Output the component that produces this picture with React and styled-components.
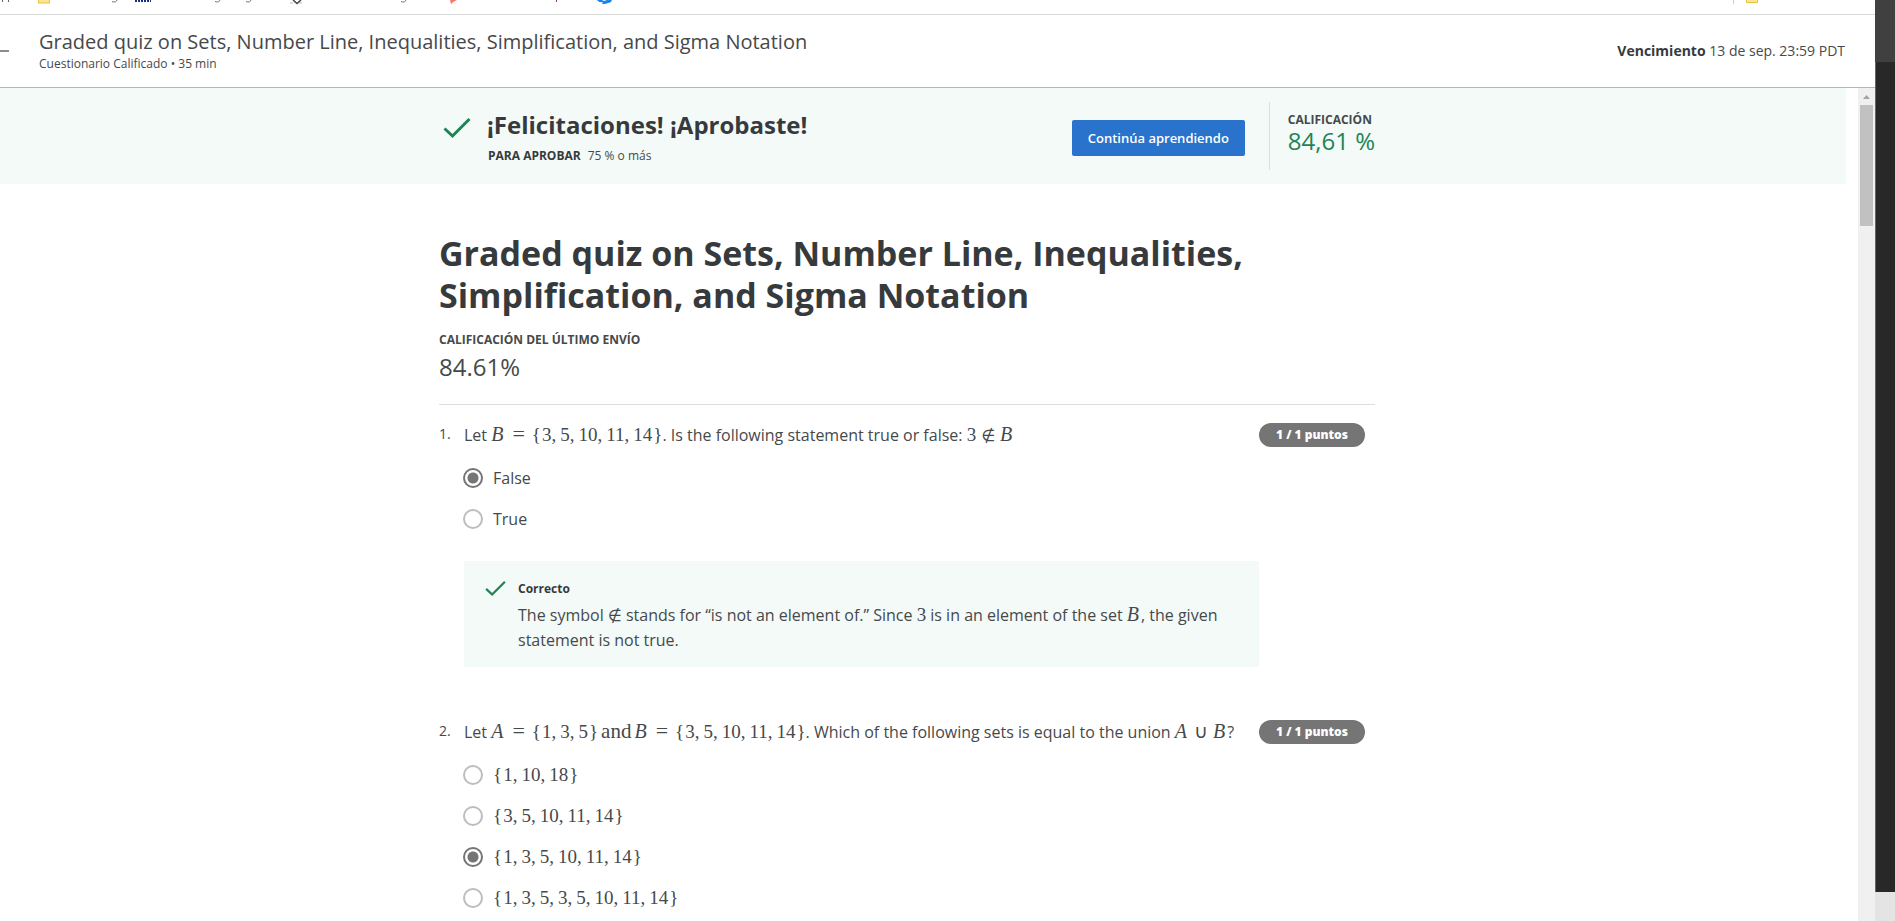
import React from "react";
import styled, { createGlobalStyle, css } from "styled-components";

const GlobalStyle = createGlobalStyle`
  *, *::before, *::after { box-sizing: border-box; }
  body {
    margin: 0;
    background: #fff;
    color: #46494b;
    font-family: "Open Sans", "Noto Sans", sans-serif;
    font-size: 16px;
    line-height: 24px;
    overflow: hidden;
  }
  h1, h2, h3, p, ol, fieldset { margin: 0; padding: 0; border: 0; }
  h1, h2, h3, strong { color: #373a3c; }
`;

/* ---------- window frame ---------- */

const Desktop = styled.div`
  display: grid;
  grid-template-columns: minmax(0, 1fr) 20px;
  height: 100vh;
`;

const BrowserWindow = styled.div`
  display: flex;
  flex-direction: column;
  min-width: 0;
  min-height: 0;
`;

const Backdrop = styled.div`
  display: flex;
  flex-direction: column;
  background: #e4e4e4;
`;

const BackdropTop = styled.div`
  height: 62px;
  background: #404040;
`;

const BackdropBody = styled.div`
  flex: 1;
  margin-bottom: 29px;
  background: #282828;
  border-left: 1px solid #666;
`;

const BookmarksBar = styled.div`
  flex: none;
  display: flex;
  justify-content: space-between;
  height: 15px;
  padding-right: 116px;
  border-bottom: 1px solid #d9d9d9;

  svg { display: block; }
`;

/* ---------- header ---------- */

const Header = styled.header`
  flex: none;
  display: flex;
  align-items: center;
  height: 73px;
  padding-right: 30px;
  border-bottom: 1px solid #b5b5b5;
`;

const BackButton = styled.button`
  width: 39px;
  height: 40px;
  padding: 0;
  border: 0;
  background: none;

  svg { display: block; }
`;

const HeaderTitles = styled.div`
  flex: 1;
  padding-top: 2px;
`;

const HeaderTitle = styled.h2`
  color: inherit;
  font-size: 20px;
  font-weight: 400;
  line-height: 24px;
`;

const HeaderKind = styled.p`
  font-size: 12px;
  line-height: 20px;
`;

const DueDate = styled.p`
  font-size: 14px;
  line-height: 20px;

  strong { font-weight: 700; }
`;

/* ---------- scrolling area ---------- */

const Viewport = styled.div`
  flex: 1;
  display: flex;
  min-height: 0;
`;

const Content = styled.main`
  flex: 1;
  min-width: 0;
  overflow: hidden;
`;

const Scrollbar = styled.div`
  flex: none;
  display: flex;
  flex-direction: column;
  align-items: center;
  width: 17px;
  background: #f0f0f0;

  svg { display: block; }
`;

const Thumb = styled.div`
  width: 13px;
  height: 121px;
  background: #c1c1c1;
`;

/* ---------- result banner ---------- */

const Banner = styled.section`
  height: 96px;
  margin-right: 12px;
  padding-right: 32px;
  background: #f3faf8;
`;

const BannerInner = styled.div`
  display: flex;
  align-items: flex-start;
  max-width: 936px;
  height: 100%;
  margin: 0 auto;
`;

const BannerCheck = styled.div`
  width: 48px;
  padding: 29px 0 0 4px;

  svg { display: block; }
`;

const BannerText = styled.div`
  flex: 1;
  padding-top: 21px;
`;

const BannerTitle = styled.h2`
  font-size: 24px;
  font-weight: 700;
  line-height: 32px;
`;

const BannerNote = styled.p`
  display: flex;
  gap: 7px;
  padding: 6px 0 0 1px;
  font-size: 12px;
  line-height: 18px;
`;

const ContinueButton = styled.button`
  height: 36px;
  width: 173px;
  margin-top: 32px;
  padding: 0;
  border: 0;
  border-radius: 2px;
  background: #2a73cc;
  color: #fff;
  font-family: inherit;
  font-size: 13px;
  font-weight: 600;
`;

const Grade = styled.div`
  height: 68px;
  margin: 14px 0 0 24px;
  padding: 9px 0 0 18px;
  border-left: 1px solid #dadfdd;
  white-space: nowrap;
`;

const Caption = styled.p`
  font-size: 12px;
  font-weight: 700;
  line-height: 18px;
`;

const Score = styled.p`
  font-size: 24px;
  line-height: 24px;
  color: ${(p) => (p.$passed ? "#1f8354" : "inherit")};
`;

/* ---------- quiz ---------- */

const Quiz = styled.div`
  padding: 48px 44px 0 0;
`;

const QuizInner = styled.div`
  max-width: 936px;
  margin: 0 auto;
`;

const QuizTitle = styled.h1`
  max-width: 860px;
  font-size: 34px;
  font-weight: 700;
  line-height: 42px;
`;

const Attempt = styled.div`
  padding: 15px 0 19px;
  border-bottom: 1px solid #ddd;

  ${Score} { line-height: 36px; }
`;

const Question = styled.section`
  display: flex;
  align-items: flex-start;
  padding-top: 16px;

  & + & { padding-top: 51px; }
`;

const Number = styled.span`
  width: 25px;
  font-size: 14px;
  line-height: 26px;
`;

const QuestionBody = styled.fieldset`
  width: 795px;
  min-width: 0;
`;

const Prompt = styled.legend`
  padding: 0;
  line-height: 28px;
  white-space: nowrap;
`;

const Options = styled.div`
  display: flex;
  flex-direction: column;
  padding-top: 8px;
`;

const Option = styled.label`
  display: flex;
  align-items: center;
  gap: 10px;
  height: 41px;
`;

const Radio = styled.input`
  appearance: none;
  width: 20px;
  height: 20px;
  margin: 0 0 0 -1px;
  border: 2px solid #bdbdbd;
  border-radius: 50%;

  &:checked {
    border-color: #757575;
    background: radial-gradient(circle, #757575 5px, transparent 6px);
  }
`;

const Points = styled.span`
  width: 106px;
  height: 24px;
  margin-top: 2px;
  border-radius: 12px;
  background: #757575;
  color: #fff;
  font-size: 12px;
  font-weight: 800;
  line-height: 24px;
  text-align: center;
`;

const Feedback = styled.div`
  display: flex;
  gap: 12px;
  margin-top: 22px;
  padding: 19px 21px 14px;
  background: #f3faf8;

  svg { flex: none; }
`;

const FeedbackTitle = styled.h3`
  font-size: 12px;
  font-weight: 700;
  line-height: 18px;
`;

const FeedbackText = styled.p`
  padding-top: 5px;
  line-height: 25px;
`;

/* ---------- mathematics ---------- */

const MathRun = styled.span`
  font-family: "Liberation Serif", serif;
  font-size: 19px;
  line-height: 20px;
  white-space: nowrap;
`;

const Symbol = styled.span`
  ${(p) => p.$kind === "variable" && css`margin-right: 2px; font-size: 20px; font-style: italic;`}
  ${(p) => p.$kind === "comma" && css`margin-right: 4px;`}
  ${(p) => p.$kind === "open" && css`margin-right: 1px;`}
  ${(p) => p.$kind === "close" && css`margin-left: 1px;`}
  ${(p) => p.$kind === "equals" && css`margin: 0 7px; font-size: 22px;`}
  ${(p) => p.$kind === "union" && css`margin: 0 5px;`}
  ${(p) => p.$kind === "member" && css`
    margin: 0 ${p.$alone ? 0 : 5}px;
    font-family: "DejaVu Sans", sans-serif;
    font-size: 16px;
  `}
  ${(p) => p.$kind === "word" && css`margin: 0 3px; font-size: 21px;`}
`;

const kinds = {
  ",": "comma",
  "{": "open",
  "}": "close",
  A: "variable",
  B: "variable",
  "=": "equals",
  "∪": "union",
  "∉": "member",
  and: "word",
};

function Formula({ children }) {
  const tokens = children.match(/[0-9]+|[a-z]+|\S/g);
  return (
    <MathRun>
      {tokens.map((token, i) => (
        <Symbol key={i} $kind={kinds[token]} $alone={tokens.length === 1}>
          {token}
        </Symbol>
      ))}
    </MathRun>
  );
}

/* ---------- icons ---------- */

function Check({ width, height }) {
  return (
    <svg width={width} height={height} viewBox="0 0 28 22" fill="none" aria-hidden="true">
      <path d="M1.5 11.5 9.5 19 26.5 2" stroke="#1f8354" strokeWidth="3" />
    </svg>
  );
}

function BookmarkMarks() {
  return (
    <svg width="620" height="5" aria-hidden="true">
      <path d="M2.500 0v2M8.500 0v2" stroke="#666" />
      <rect x="38.500" y="-4" width="11" height="7" fill="#ffe694" stroke="#e8c23c" />
      <path d="M112 1.500q4 1.500 5-1.500M215 1.500q4 1.500 5-1.500M246 1.500q4 1.500 5-1.500M401 1.500q4 1.500 5-1.500" fill="none" stroke="#777" />
      <path d="M135 1h16" stroke="#1d2d7c" strokeWidth="2" strokeDasharray="2 1" />
      <path d="M290 3h14" stroke="#bbb" strokeDasharray="3 6" />
      <path d="M293 0l4 3.500L301 0" fill="none" stroke="#444" strokeWidth="1.500" />
      <path d="M450 0h7l-3 1.500L451 4z" fill="#f4796b" />
      <path d="M556.500 0v2" stroke="#7b3a7b" />
      <path d="M597 0h5l2 1 3-1h5q-1 3-4 3l-3 1h-3l1-2q-4 1-6-2z" fill="#1585f2" />
    </svg>
  );
}

/* ---------- page ---------- */

const questions = [
  {
    points: "1 / 1 puntos",
    prompt: (
      <>
        Let <Formula>{"B={3,5,10,11,14}"}</Formula>. Is the following statement true or false:{" "}
        <Formula>3∉B</Formula>
      </>
    ),
    options: ["False", "True"],
    selected: 0,
    feedback: (
      <>
        The symbol <Formula>∉</Formula> stands for “is not an element of.” Since <Formula>3</Formula> is in an
        element of the set <Formula>B</Formula>, the given statement is not true.
      </>
    ),
  },
  {
    points: "1 / 1 puntos",
    prompt: (
      <>
        Let <Formula>{"A={1,3,5}andB={3,5,10,11,14}"}</Formula>. Which of the following sets is equal to the
        union <Formula>A∪B</Formula>?
      </>
    ),
    options: ["{1,10,18}", "{3,5,10,11,14}", "{1,3,5,10,11,14}", "{1,3,5,3,5,10,11,14}"],
    selected: 2,
  },
];

export default function App() {
  return (
    <>
      <GlobalStyle />
      <Desktop>
        <BrowserWindow>
          <BookmarksBar>
            <BookmarkMarks />
            <svg width="26" height="5" aria-hidden="true">
              <path d="M.5 0v4" stroke="#ccc" />
              <path d="M13.500-4v6.500h11V-4" fill="#ffe694" stroke="#e8c23c" />
            </svg>
          </BookmarksBar>
          <Header>
            <BackButton aria-label="Atrás">
              <svg width="9" height="40" aria-hidden="true">
                <path d="M0 20h9" stroke="#8c8c8c" strokeWidth="2" />
              </svg>
            </BackButton>
            <HeaderTitles>
              <HeaderTitle>
                Graded quiz on Sets, Number Line, Inequalities, Simplification, and Sigma Notation
              </HeaderTitle>
              <HeaderKind>Cuestionario Calificado • 35 min</HeaderKind>
            </HeaderTitles>
            <DueDate>
              <strong>Vencimiento</strong> 13 de sep. 23:59 PDT
            </DueDate>
          </Header>

          <Viewport>
            <Content>
              <Banner>
                <BannerInner>
                  <BannerCheck>
                    <Check width={28} height={22} />
                  </BannerCheck>
                  <BannerText>
                    <BannerTitle>¡Felicitaciones! ¡Aprobaste!</BannerTitle>
                    <BannerNote>
                      <Caption as="strong">PARA APROBAR</Caption>
                      <span>75 % o más</span>
                    </BannerNote>
                  </BannerText>
                  <ContinueButton>Continúa aprendiendo</ContinueButton>
                  <Grade>
                    <Caption>CALIFICACIÓN</Caption>
                    <Score $passed>84,61 %</Score>
                  </Grade>
                </BannerInner>
              </Banner>

              <Quiz>
                <QuizInner>
                  <QuizTitle>
                    Graded quiz on Sets, Number Line, Inequalities, Simplification, and Sigma Notation
                  </QuizTitle>
                  <Attempt>
                    <Caption>CALIFICACIÓN DEL ÚLTIMO ENVÍO</Caption>
                    <Score>84.61%</Score>
                  </Attempt>

                  {questions.map((question, q) => (
                    <Question key={q}>
                      <Number>{q + 1}.</Number>
                      <QuestionBody>
                        <Prompt>{question.prompt}</Prompt>
                        <Options>
                          {question.options.map((option, i) => (
                            <Option key={i}>
                              <Radio
                                type="radio"
                                name={`question-${q}`}
                                defaultChecked={i === question.selected}
                              />
                              {option.startsWith("{") ? <Formula>{option}</Formula> : <span>{option}</span>}
                            </Option>
                          ))}
                        </Options>
                        {question.feedback && (
                          <Feedback>
                            <Check width={21} height={17} />
                            <div>
                              <FeedbackTitle>Correcto</FeedbackTitle>
                              <FeedbackText>{question.feedback}</FeedbackText>
                            </div>
                          </Feedback>
                        )}
                      </QuestionBody>
                      <Points>{question.points}</Points>
                    </Question>
                  ))}
                </QuizInner>
              </Quiz>
            </Content>

            <Scrollbar>
              <svg width="17" height="17" aria-hidden="true">
                <path d="M5 11h7L8.500 7z" fill="#a3a3a3" />
              </svg>
              <Thumb />
            </Scrollbar>
          </Viewport>
        </BrowserWindow>
        <Backdrop>
          <BackdropTop />
          <BackdropBody />
        </Backdrop>
      </Desktop>
    </>
  );
}
